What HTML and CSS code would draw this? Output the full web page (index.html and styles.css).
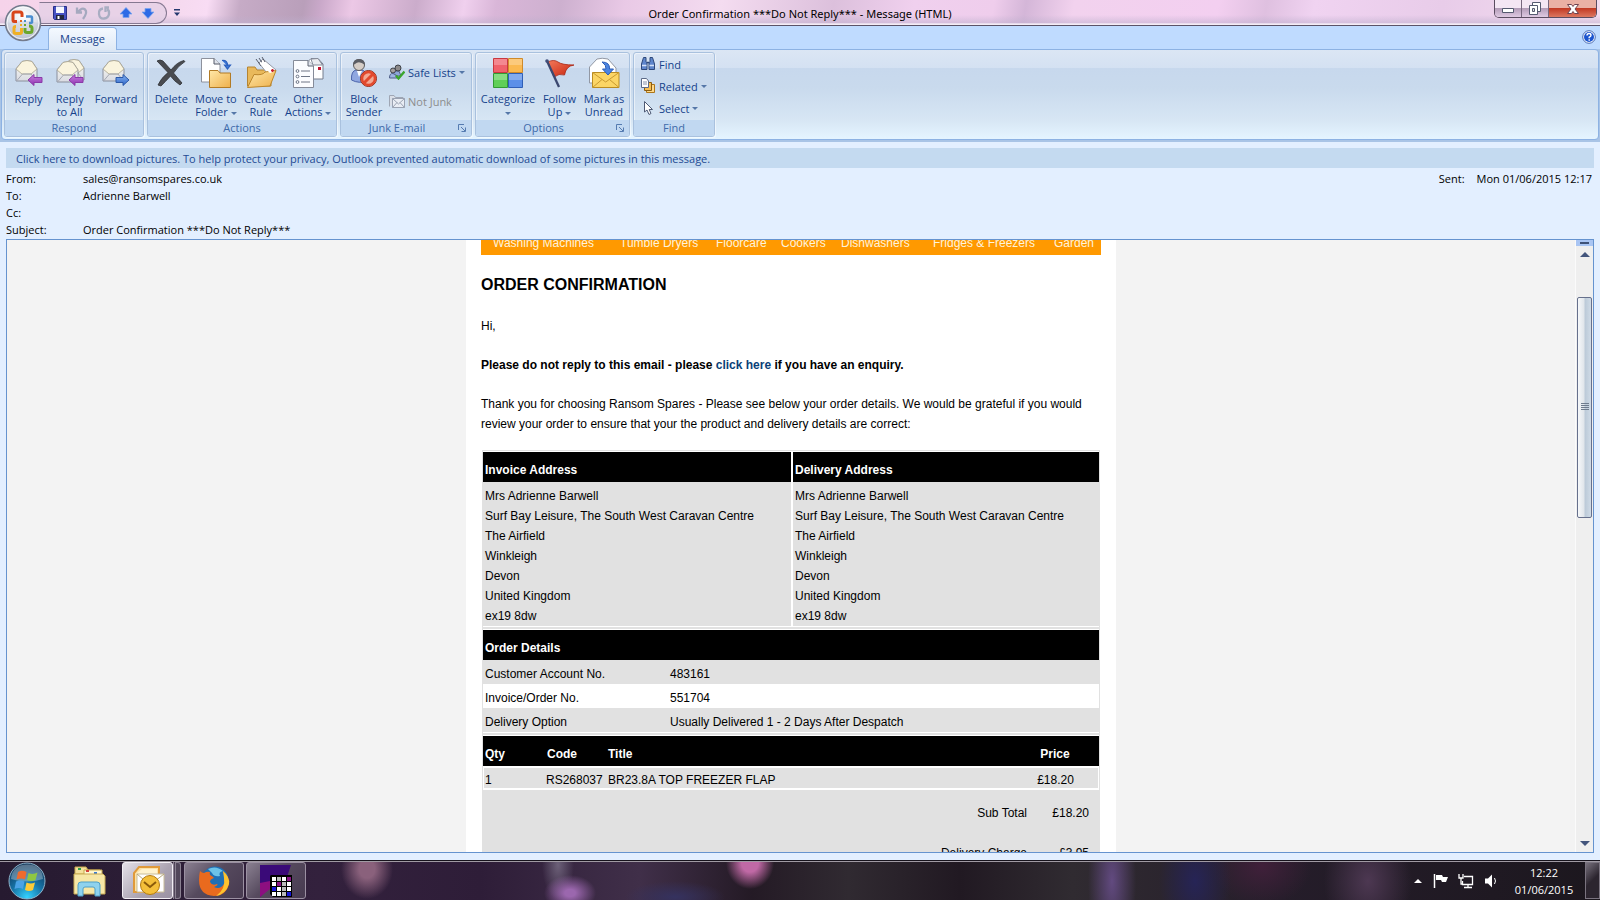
FILE: index.html
```html
<!DOCTYPE html>
<html lang="en">
<head>
<meta charset="utf-8">
<title>Order Confirmation ***Do Not Reply*** - Message (HTML)</title>
<link rel="stylesheet" href="styles.css">
</head>
<body>
<svg class="defs" width="0" height="0" aria-hidden="true">
  <defs>
    <linearGradient id="gFolder" x1="0" y1="0" x2="1" y2="1"><stop offset="0" stop-color="#ffe8a8"/><stop offset="1" stop-color="#eeb04c"/></linearGradient>
    <linearGradient id="gPaper" x1="0" y1="0" x2="0" y2="1"><stop offset="0" stop-color="#fffef6"/><stop offset="1" stop-color="#d9dbe2"/></linearGradient>
    <linearGradient id="gPurple" x1="0" y1="0" x2="0" y2="1"><stop offset="0" stop-color="#c983e0"/><stop offset="1" stop-color="#8d2fb0"/></linearGradient>
    <linearGradient id="gBlue" x1="0" y1="0" x2="0" y2="1"><stop offset="0" stop-color="#86b4f2"/><stop offset="1" stop-color="#2f66c8"/></linearGradient>
    <linearGradient id="gFlag" x1="0" y1="0" x2="1" y2="1"><stop offset="0" stop-color="#f47a5a"/><stop offset="1" stop-color="#c5200c"/></linearGradient>
    <radialGradient id="gOrb" cx=".5" cy=".3" r=".75"><stop offset="0" stop-color="#fff"/><stop offset=".55" stop-color="#dfe3ec"/><stop offset="1" stop-color="#a4acbd"/></radialGradient>
    <radialGradient id="gStart" cx=".5" cy=".95" r=".9"><stop offset="0" stop-color="#35d2ff"/><stop offset=".5" stop-color="#1673a6"/><stop offset="1" stop-color="#10365a"/></radialGradient>
    <g id="env">
      <path d="M2 11 8 3.500Q13 1.500 18 3.500L23 11V23H2z" fill="url(#gPaper)" stroke="#8a8f9c"/>
      <path d="M2 11 8 3.500Q13 1.500 18 3.500L23 11 17 16H8z" fill="#faf4de" stroke="#a9a48f" stroke-width=".8"/>
      <path d="M2.500 23 8.500 16H17L22.500 23" fill="none" stroke="#a5a9b4"/>
    </g>
  </defs>
</svg>

<header class="titlebar">
  <button class="orb" type="button" aria-label="Office Button">
    <svg width="38" height="38" viewBox="0 0 38 38"><circle cx="19" cy="19" r="17.500" fill="url(#gOrb)" stroke="#747b8d" stroke-width="1.500"/><path d="M3 19Q19 15 35 19Q34 34 19 35Q4 34 3 19" fill="#c4cad8" opacity=".5"/><circle cx="19" cy="19" r="16" fill="none" stroke="#fff" opacity=".8"/>
      <g fill="none" stroke-width="3"><path d="M13 17.500H10Q9 17.500 9 16V10Q9 8 11 8H16Q18 8 18 10V13" stroke="#d8451a"/><path d="M22 12.500H27Q28 12.500 28 14V18.500Q28 19 25 19" stroke="#4a8ed0" stroke-width="2.500"/><path d="M12 22.500Q10 22.500 10 24V28Q10 29.500 12 29.500H16Q17.500 29.500 17.500 28V24" stroke="#f0b024"/><path d="M21 24V27Q21 28.500 23 28.500H26Q28 28.500 28 26.500V24Q28 22 25 22" stroke="#6ba72c"/></g>
      <g fill="#e06a25"><rect x="16" y="16" width="2" height="2"/><rect x="20" y="16" width="2" height="2" fill="#4a8ed0"/><rect x="16" y="20" width="2" height="2" fill="#f0b024"/><rect x="20" y="20" width="2" height="2" fill="#6ba72c"/></g>
    </svg>
  </button>
  <nav class="qat" aria-label="Quick Access Toolbar">
    <button type="button" aria-label="Save"><svg width="16" height="16" viewBox="0 0 16 16"><path d="M1.500 1.500h13v13h-12l-1-1z" fill="#4651c4" stroke="#272f86"/><path d="M4 1.500h8V8H4z" fill="#f5f8ff"/><path d="M4 10h8v4.500H4z" fill="#22273c"/><path d="M5.500 11h2v3h-2z" fill="#fff"/></svg></button>
    <button type="button" aria-label="Undo"><svg width="16" height="16" viewBox="0 0 16 16"><path d="M3 2.500V7.500H8M4 7Q8 2 11 4.500T9 14" fill="none" stroke="#a5a9bf" stroke-width="2.300"/></svg></button>
    <button type="button" aria-label="Redo"><svg width="16" height="16" viewBox="0 0 16 16"><path d="M7 3.500Q2.500 4 3 9T8 13.500 13 9 11 4.500M13 2.500H9.500V7" fill="none" stroke="#a9adc2" stroke-width="2.300"/></svg></button>
    <button type="button" aria-label="Previous Item"><svg width="16" height="16" viewBox="0 0 16 16"><path d="M8 2.500 14 9H11V12.500H5V9H2z" fill="#2e6be6" stroke="#7ba4ee" stroke-width=".8"/></svg></button>
    <button type="button" aria-label="Next Item"><svg width="16" height="16" viewBox="0 0 16 16"><path d="M8 13.500 14 7H11V3.500H5V7H2z" fill="#2e6be6" stroke="#7ba4ee" stroke-width=".8"/></svg></button>
  </nav>
  <button class="qat-more" type="button" aria-label="Customize Quick Access Toolbar"><svg width="8" height="8" viewBox="0 0 8 8"><path d="M1 0h6v1.500H1zM1 3.500h6L4 7z" fill="#25386e"/></svg></button>
  <h1 class="window-title">Order Confirmation ***Do Not Reply*** - Message (HTML)</h1>
  <div class="window-buttons">
    <button type="button" aria-label="Minimize"><svg width="14" height="14" viewBox="0 0 14 14"><path d="M1.500 6.500h11v4h-11z" fill="#fff" stroke="#555a70"/></svg></button>
    <button type="button" aria-label="Restore Down"><svg width="14" height="14" viewBox="0 0 14 14"><path d="M4.500.5h8v9h-8z" fill="#fff" stroke="#555a70"/><path d="M1.500 3.500h8v9h-8z" fill="#fff" stroke="#555a70"/><path d="M4.500 6.500h2v3h-2z" fill="#ddd" stroke="#555a70"/></svg></button>
    <button class="close" type="button" aria-label="Close"><svg width="14" height="14" viewBox="0 0 14 14"><path d="M1.500 2.500h4L7 4.500l1.500-2h4L9 7l3.500 4.500h-4L7 9.500l-1.500 2h-4L5 7z" fill="#fff" stroke="#6d4350"/></svg></button>
  </div>
</header>

<div class="tabs">
  <button class="tab" type="button">Message</button>
  <button class="help" type="button" aria-label="Help"><svg width="14" height="14" viewBox="0 0 14 14"><circle cx="7" cy="7" r="6.300" fill="#fff" stroke="#496bb2"/><circle cx="7" cy="7" r="5" fill="#1c55cf"/><path d="M5 5.500Q5 3.500 7 3.500T9 5.200Q9 6.300 7.200 7.200V8.300M7.200 9.300V10.700" fill="none" stroke="#fff" stroke-width="1.400"/></svg></button>
</div>

<div class="ribbon-wrap">
<div class="ribbon">
  <section class="group respond">
    <div class="tools">
      <button class="big" type="button"><svg width="32" height="32" viewBox="0 0 32 32"><use href="#env" x="1" y="1"/><path d="M15 23 21 17.500V20.500H29V25.500H21V28.500z" fill="url(#gPurple)" stroke="#8a3ba8"/></svg><span>Reply</span></button>
      <button class="big" type="button"><svg width="32" height="32" viewBox="0 0 32 32"><use href="#env" x="7" y="0"/><use href="#env" x="1" y="2"/><path d="M15 23 21 17.500V20.500H29V25.500H21V28.500z" fill="url(#gPurple)" stroke="#8a3ba8"/></svg><span>Reply<br>to All</span></button>
      <button class="big" type="button"><svg width="32" height="32" viewBox="0 0 32 32"><use href="#env" x="1" y="1"/><path d="M29 23 23 17.500V20.500H16V25.500H23V28.500z" fill="url(#gBlue)" stroke="#2b58a8"/></svg><span>Forward</span></button>
    </div>
    <h2>Respond</h2>
  </section>

  <section class="group actions">
    <div class="tools">
      <button class="big" type="button"><svg width="32" height="32" viewBox="0 0 32 32"><path d="M2 4Q5 2 8 4L16 13Q22 5 29 3.500L30 4.500Q23 9 18.500 16L27 26 25 28Q19 24 15.500 19Q10 25 6 29L3 28Q6 21 13 15.500z" fill="#494b50" stroke="#303236" stroke-width=".8"/></svg><span>Delete</span></button>
      <button class="big" type="button"><svg width="32" height="32" viewBox="0 0 32 32"><path d="M1.500 1.500H14L20 7V25H1.500z" fill="#fff" stroke="#8d919c"/><path d="M14 1.500V7H20" fill="#dfe3ea" stroke="#555b68"/><path d="M9.500 13.500H18L20 16H30.500V30.500H9.500z" fill="url(#gFolder)" stroke="#b27b25"/><path d="M22 3.500Q28 3 27.500 9M24.500 8H30.500L27.500 12z" fill="#3b78d8" stroke="#2b5fbd" stroke-width="1.200"/></svg><span>Move to<br>Folder <i class="dd"></i></span></button>
      <button class="big" type="button"><svg width="32" height="32" viewBox="0 0 32 32"><path d="M2.500 29V10H10L12 13H26V29z" fill="#e9b95b" stroke="#b58432"/><path d="M14 6 18 2 31 13 25 20z" fill="#fff" stroke="#9498a5"/><path d="M11 2 16 9M14 1 18 7M17 0 20 5" stroke="#555b6a"/><path d="M2.500 30.500 9 17.500Q18 18.500 20 15L31 13.500 25 29z" fill="url(#gFolder)" stroke="#bb862c"/><path d="M15 7 25 16 29 14.500 18 4z" fill="#fff"/><path d="M26 13.500h3M27.500 12v3" stroke="#c8202e" stroke-width="1.400"/></svg><span>Create<br>Rule</span></button>
      <button class="big" type="button"><svg width="32" height="32" viewBox="0 0 32 32"><path d="M15.500 5 19 1.500H26L31 7V22H15.500z" fill="#fff" stroke="#747c8c"/><path d="M19 2 26 1.500 30.500 8H21z" fill="#e9ebf0" stroke="#858b99"/><path d="M26 10h3v3h-3z" fill="#c4122f"/><path d="M1.500 3.500H16L21.500 9V30.500H1.500z" fill="#fbfcff" stroke="#858b99"/><path d="M16 3.500V9H21.500" fill="#dfe3ec" stroke="#606675"/><g fill="#fff" stroke="#5d6679" stroke-width=".9"><circle cx="5.500" cy="14" r="1.400"/><circle cx="5.500" cy="19.500" r="1.400"/><circle cx="5.500" cy="25" r="1.400"/><path d="M9 14h9M9 19.500h9M9 25h9"/></g></svg><span>Other<br>Actions <i class="dd"></i></span></button>
    </div>
    <h2>Actions</h2>
  </section>

  <section class="group junk">
    <div class="tools">
      <button class="big" type="button"><svg width="32" height="32" viewBox="0 0 32 32"><path d="M3.500 23Q3 14 8 13H14Q19 14 19 24Q11 27 3.500 23" fill="#8fa7e0" stroke="#4c64ab"/><path d="M9 14 11 20 14 14z" fill="#fff"/><circle cx="11" cy="8" r="5.500" fill="#d5cdc6" stroke="#5c5a5a"/><path d="M5 8Q5 2 11 2T17 8Q11 3 7 7z" fill="#5b5d63"/><circle cx="20.500" cy="21.500" r="8" fill="#f3a893" stroke="#8c2818"/><circle cx="20.500" cy="21.500" r="6.500" fill="none" stroke="#e2492d" stroke-width="2.500"/><path d="M16 26 25 17" stroke="#e2492d" stroke-width="3"/></svg><span>Block<br>Sender</span></button>
      <div class="stack">
        <button class="small" type="button"><svg width="16" height="16" viewBox="0 0 16 16"><path d="M4 9Q5 6 10 7L12 12H4z" fill="#8ea6d8" stroke="#4f5f88"/><circle cx="9" cy="4" r="3" fill="#8d8a8a" stroke="#3f4249"/><circle cx="4" cy="6.500" r="2.500" fill="#a5a0a0" stroke="#3f4249"/><path d="M.5 14Q.5 9 4 9.500T8 14z" fill="#9db3e2" stroke="#4f5f88"/><path d="M7 11.500 9.500 14.500 15.500 7.500" fill="none" stroke="#3aa52c" stroke-width="2.300"/></svg><span>Safe Lists</span><i class="dd"></i></button>
        <button class="small" type="button" disabled><svg width="16" height="16" viewBox="0 0 16 16"><path d="M.5 13.500V2.500H5L6.500 4.500H14V6" fill="#dadfe8" stroke="#9fa6b4"/><path d="M3.500 5.500H15.500V14.500H3.500z" fill="#e9edf4" stroke="#9aa2b2"/><path d="M3.500 5.500 9.500 11 15.500 5.500M3.500 14.500 8 9.500M15.500 14.500 11 9.500" fill="none" stroke="#9aa2b2"/></svg><span>Not Junk</span></button>
      </div>
    </div>
    <h2>Junk E-mail</h2>
    <button class="launcher" type="button" aria-label="Junk E-mail Options"><svg width="8" height="8" viewBox="0 0 8 8"><path d="M.5 6V.5H6M3 3 7 7M7.500 3.500V7.500H3.500" fill="none" stroke="#557bb0"/></svg></button>
  </section>

  <section class="group options">
    <div class="tools">
      <button class="big" type="button"><svg width="32" height="32" viewBox="0 0 32 32"><path d="M1.500 1.500h14v14h-14z" fill="#f0616b" stroke="#c9383f"/><path d="M16.500 1.500h14v14h-14z" fill="#fbb950" stroke="#cf8a2a"/><path d="M1.500 16.500h14v14h-14z" fill="#5fcf57" stroke="#319a34"/><path d="M16.500 16.500h14v14h-14z" fill="#5b8fe8" stroke="#2f5fb7"/><path d="M2 8H15V2H2zM17 8H30V2H17zM2 23H15V17H2zM17 23H30V17H17z" fill="#fff" opacity=".25"/></svg><span>Categorize<br><i class="dd"></i></span></button>
      <button class="big" type="button"><svg width="32" height="32" viewBox="0 0 32 32"><path d="M4.500 5Q11 2 15 5T31 8Q23 9 21.500 18Q16 16 11 20z" fill="url(#gFlag)" stroke="#a92412" stroke-width=".8"/><path d="M4 4 16 30" stroke="#3b4870" stroke-width="2.300"/><circle cx="4" cy="4" r="1.800" fill="#414f7a"/></svg><span>Follow<br>Up <i class="dd"></i></span></button>
      <button class="big" type="button"><svg width="32" height="32" viewBox="0 0 32 32"><path d="M1.500 26V10L9 2Q14 .5 20 2L28 11V26z" fill="#fff" stroke="#9298a4"/><path d="M4.500 15.500H31V30.500H4.500z" fill="#fbd565" stroke="#ba8c22"/><path d="M4.500 15.500 17.700 25 31 15.500M4.500 30.500 14 22.500M31 30.500 21.500 22.500" fill="none" stroke="#c99a31"/><path d="M14 5Q22 5 21.500 12H25.500L20 18 14.500 12H18Q18.500 8 14 5" fill="#4b84e0" stroke="#2b5cb8"/></svg><span>Mark as<br>Unread</span></button>
    </div>
    <h2>Options</h2>
    <button class="launcher" type="button" aria-label="Message Options"><svg width="8" height="8" viewBox="0 0 8 8"><path d="M.5 6V.5H6M3 3 7 7M7.500 3.500V7.500H3.500" fill="none" stroke="#557bb0"/></svg></button>
  </section>

  <section class="group find">
    <div class="tools">
      <div class="stack">
        <button class="small" type="button"><svg width="16" height="16" viewBox="0 0 16 16"><path d="M3.500 1.500h2.500v4l1 1v7H1.500V8zM10 1.500h2.500L14.500 8v5.500H9v-7l1-1z" fill="#5f86cc" stroke="#2f4879"/><path d="M2 9.500h4.500M9.500 9.500H14" stroke="#d5e2f8" stroke-width="1.500"/><path d="M6.500 6.500h3" stroke="#2f4879" stroke-width="1.500"/></svg><span>Find</span></button>
        <button class="small" type="button"><svg width="16" height="16" viewBox="0 0 16 16"><path d="M6.500 6.500h8v8h-8z" fill="#ffd98a" stroke="#ad7518"/><path d="M4.500 4.500h7v8h-7z" fill="#f8bd50" stroke="#8a5d12"/><path d="M1.500.5H6.500L8.500 3V9.500h-7z" fill="#fff" stroke="#5c6b88"/><path d="M3 4h4M3 6h4" stroke="#8592ab"/></svg><span>Related</span><i class="dd"></i></button>
        <button class="small" type="button"><svg width="16" height="16" viewBox="0 0 16 16"><path d="M4.500 1.500V12L7 10 9 14.500 11 13.500 9.200 9.500H12.500z" fill="#fff" stroke="#4e5a75"/></svg><span>Select</span><i class="dd"></i></button>
      </div>
    </div>
    <h2>Find</h2>
  </section>
</div>
</div>

<main class="message">
  <button class="infobar" type="button">Click here to download pictures. To help protect your privacy, Outlook prevented automatic download of some pictures in this message.</button>
  <div class="headers">
    <dl class="fields">
      <dt>From:</dt><dd>sales@ransomspares.co.uk</dd>
      <dt>To:</dt><dd>Adrienne Barwell</dd>
      <dt>Cc:</dt><dd></dd>
      <dt>Subject:</dt><dd>Order Confirmation ***Do Not Reply***</dd>
    </dl>
    <p class="sent"><span>Sent:</span><span>Mon 01/06/2015 12:17</span></p>
  </div>

  <div class="pane">
    <div class="viewport">
      <article class="mail">
        <nav class="shop-nav">
          <a href="#washing">Washing Machines</a><a href="#dryers">Tumble Dryers</a><a href="#floorcare">Floorcare</a><a href="#cookers">Cookers</a><a href="#dishwashers">Dishwashers</a><a href="#fridges">Fridges &amp; Freezers</a><a href="#garden">Garden</a>
        </nav>
        <h2>ORDER CONFIRMATION</h2>
        <p>Hi,</p>
        <p class="strong">Please do not reply to this email - please <a href="#enquiry">click here</a> if you have an enquiry.</p>
        <p>Thank you for choosing Ransom Spares - Please see below your order details. We would be grateful if you would review your order to ensure that your the product and delivery details are correct:</p>
        <div class="tables">
          <table class="addresses">
            <thead><tr><th>Invoice Address</th><th>Delivery Address</th></tr></thead>
            <tbody><tr>
              <td>Mrs Adrienne Barwell<br>Surf Bay Leisure, The South West Caravan Centre<br>The Airfield<br>Winkleigh<br>Devon<br>United Kingdom<br>ex19 8dw</td>
              <td>Mrs Adrienne Barwell<br>Surf Bay Leisure, The South West Caravan Centre<br>The Airfield<br>Winkleigh<br>Devon<br>United Kingdom<br>ex19 8dw</td>
            </tr></tbody>
          </table>
          <table class="details">
            <thead><tr><th colspan="2">Order Details</th></tr></thead>
            <tbody>
              <tr><td>Customer Account No.</td><td>483161</td></tr>
              <tr><td>Invoice/Order No.</td><td>551704</td></tr>
              <tr><td>Delivery Option</td><td>Usually Delivered 1 - 2 Days After Despatch</td></tr>
            </tbody>
          </table>
          <table class="items">
            <thead><tr><th>Qty</th><th>Code</th><th>Title</th><th>Price</th></tr></thead>
            <tbody><tr><td>1</td><td>RS268037</td><td>BR23.8A TOP FREEZER FLAP</td><td>£18.20</td></tr></tbody>
          </table>
          <table class="totals">
            <tbody>
              <tr><td>Sub Total</td><td>£18.20</td></tr>
              <tr><td>Delivery Charge</td><td>£3.95</td></tr>
            </tbody>
          </table>
        </div>
      </article>
    </div>
    <div class="scrollbar" aria-hidden="true">
      <span class="split"></span>
      <span class="arrow up"></span>
      <span class="track"><span class="thumb"><svg width="8" height="8" viewBox="0 0 8 8"><path d="M0 .5h8M0 2.500h8M0 4.500h8M0 6.500h8" stroke="#6f7c8e"/></svg></span></span>
      <span class="arrow down"></span>
    </div>
  </div>
</main>

<footer class="taskbar">
  <button class="start" type="button" aria-label="Start"><svg width="38" height="38" viewBox="0 0 38 38"><circle cx="19" cy="19" r="18" fill="url(#gStart)" stroke="#8fb4cb"/><path d="M3 17Q4 3 19 2.500T35 17Q19 22 3 17" fill="#fff" opacity=".3"/><path d="M10 10Q14 7.500 18.500 10L17 17.500Q13 15.500 8.500 17.500z" fill="#ee6b2e"/><path d="M20.500 11Q25 13 29.500 10.500L27.500 18Q23 20 19 18z" fill="#8fc742"/><path d="M8 19.500Q12.500 17.500 16.500 19.500L15 27Q11 25 6.500 27z" fill="#4aa3e6"/><path d="M18.500 20.500Q23 22.500 27 20.500L25 28Q21 30 17 28z" fill="#fccb38"/></svg></button>
  <button class="task bare" type="button" aria-label="Windows Explorer"><svg width="34" height="32" viewBox="0 0 34 32"><path d="M3 2h11l2 3h12v4H3z" fill="#f5e19c" stroke="#c6a84e"/><path d="M6 3h3v2H6z" fill="#2fa04a"/><path d="M12 5h18v5H12z" fill="#fff6cf" stroke="#c6a84e"/><path d="M14 5h3v2h-3z" fill="#d5413a"/><path d="M22 7h3v2h-3z" fill="#3b7dd2"/><path d="M2 9h29l2 2v18H2z" fill="#f7e7a6" stroke="#c9ab55"/><path d="M6 31V20Q6 17 9 17H25Q28 17 28 20V31H23V24Q23 22 21 22H13Q11 22 11 24V31z" fill="#8ed2ee" stroke="#4d9fc8"/></svg></button>
  <button class="task active" type="button" aria-label="Microsoft Outlook"><svg width="34" height="32" viewBox="0 0 34 32"><path d="M3 27V8L8 2H28V27z" fill="#fbe2a6" stroke="#e09a3a" stroke-width="2"/><path d="M6 8 11 4H26V9H6z" fill="#fff3cf"/><path d="M6 9H33V27H6z" fill="#fff" stroke="#c9bd9a"/><path d="M6 9 19 20 33 9" fill="none" stroke="#b9a97b"/><circle cx="19" cy="20" r="9.500" fill="#f4bf3a" stroke="#b37b12"/><path d="M13 17 19 22 25 17" fill="none" stroke="#8a5a0a" stroke-width="2"/></svg></button>
  <span class="stacked"></span>
  <button class="task" type="button" aria-label="Firefox"><svg width="32" height="32" viewBox="0 0 32 32"><circle cx="17" cy="15" r="13.500" fill="#1f6fb5"/><path d="M10 4Q18 0 25 6Q20 7 22 11Q16 12 14 8z" fill="#6cc2e8"/><path d="M2 6Q4 8 6 8Q9 6 12 7Q11 10 14 11L16 13Q12 14 12 17Q14 21 19 19Q21 20 16 22Q22 25 26 19Q28 13 25 6Q32 12 31 19Q28 31 16 31Q1 30 1 15Q1 10 2 6" fill="#e96a1e"/><path d="M25 6Q32 12 31 19Q28 29 18 31Q28 24 26 13z" fill="#fdc32f"/></svg></button>
  <button class="task" type="button" aria-label="Application"><svg width="34" height="32" viewBox="0 0 34 32"><path d="M1 0H32L28 12H11V22L1 32z" fill="#3a0a78"/><path d="M1 18 11 16V24L1 32z" fill="#8c0f80"/><path d="M12 10H33V32H14L11 29V11z" fill="#000"/><g fill="#fff"><path d="M13 12h4v4h-4zM23 12h4v4h-4zM13 17h4v4h-4zM28 17h4v4h-4zM18 22h4v4h-4zM28 22h4v4h-4zM13 27h4v4h-4zM18 27h4v4h-4z"/></g><g fill="#bbb"><path d="M18 12h4v4h-4zM23 17h4v4h-4zM23 22h4v4h-4zM23 27h4v4h-4z"/></g><path d="M28 12h4v4h-4zM18 17h4v4h-4z" fill="#8c1589"/><path d="M13 22h4v4h-4zM28 27h4v4h-4z" fill="#1818d8"/></svg></button>
  <div class="tray">
    <button type="button" aria-label="Show hidden icons"><svg width="8" height="8" viewBox="0 0 8 8"><path d="M0 6 4 2 8 6z" fill="#fff"/></svg></button>
    <button type="button" aria-label="Action Center"><svg width="16" height="16" viewBox="0 0 16 16"><path d="M1.500 1v14" stroke="#fff" stroke-width="1.500"/><path d="M3 2h6l1 2h5l-2 5H9L8 7H3z" fill="#fff"/></svg></button>
    <button type="button" aria-label="Network"><svg width="16" height="16" viewBox="0 0 16 16"><path d="M6 3.500h8.500v8H4.500V8" fill="none" stroke="#fff" stroke-width="1.300"/><path d="M10 11.500v3M6 14.500h8M1 1v4h4V1M3 5v6h2" fill="none" stroke="#fff" stroke-width="1.300"/></svg></button>
    <button type="button" aria-label="Volume"><svg width="16" height="16" viewBox="0 0 16 16"><path d="M2 5.500h3L9 1.500v13L5 10.500H2z" fill="#fff"/><path d="M11.500 5Q13.500 8 11.500 11" fill="none" stroke="#fff"/></svg></button>
    <time class="clock" datetime="2015-06-01T12:22"><span>12:22</span><span>01/06/2015</span></time>
    <button class="desktop" type="button" aria-label="Show desktop"></button>
  </div>
</footer>
</body>
</html>
```
FILE: styles.css
```css
* { box-sizing: border-box; }
body {
  margin: 0;
  height: 100vh;
  display: flex;
  flex-direction: column;
  overflow: hidden;
  background: #e3efff;
  color: #000;
  font: 11px/13px "Open Sans", "Noto Sans", sans-serif;
}
button { border: 0; padding: 0; margin: 0; background: none; color: inherit; font: inherit; }
h1, h2, p, dl, dd { margin: 0; font-weight: normal; }
svg { display: block; flex: none; }
.defs { position: absolute; }

/* Title bar */
.titlebar {
  position: relative;
  flex: none;
  display: flex;
  height: 26px;
  border-bottom: 1px solid #5b5368;
  background:
    linear-gradient(transparent 60%, rgba(190, 175, 205, .5) 90%, #f4ecf6 96%),
    linear-gradient(100deg, #f6d3ea 0, #f4d8ec 10%, #f8dcf4 13%, #c6abc6 15%, #b99fba 19%, #c9a8c9 20%, #ecc8e6 22%, #cbaccb 26%, #f0d0ee 29%, #d9b6d8 31%, #cdb0cf 35%, #e9c9e6 39%, #f4dcf0 45%, #dcc0dc 52%, #f0d0ee 57%, #efcdec 62%, #d4b6d8 64%, #f2d2ee 67%, #f3cff0 76%, #dfc0e0 79%, #f0d3f1 82%, #e8cce9 90%, #f4def0 100%);
}
.orb { position: absolute; z-index: 2; left: 4px; top: 4px; }
.qat {
  display: flex;
  align-items: center;
  gap: 6px;
  margin: 2px 0 1px 39px;
  padding: 0 10px 0 12px;
  border: 1px solid #857891;
  border-left-color: transparent;
  border-radius: 0 11px 11px 0;
  background: rgba(226, 208, 230, .7);
}
.qat-more { width: 20px; display: grid; place-items: center; }
.window-title {
  position: absolute;
  inset: 0;
  text-align: center;
  font-size: 11px;
  font-family: "Noto Sans", "Open Sans", sans-serif;
  line-height: 27px;
  pointer-events: none;
}
.window-buttons { display: flex; margin: 0 3px 0 auto; height: 18px; border: 1px solid #5a4c60; border-top: 0; border-radius: 0 0 5px 5px; overflow: hidden; }
.window-buttons button { width: 27px; display: grid; place-items: center; border-right: 1px solid #77677e; background: linear-gradient(#f4e6f4 45%, #b49db9 50%, #dfcae2); }
.window-buttons .close { width: 47px; border: 0; background: linear-gradient(#eab0a4 45%, #c23a24 50%, #dd7861); }

/* Ribbon */
.tabs { flex: none; display: flex; justify-content: space-between; align-items: flex-end; height: 23px; padding: 0 4px 0 48px; background: #bfdbff; }
.tab {
  position: relative;
  z-index: 1;
  width: 69px;
  height: 23px;
  margin-bottom: -1px;
  padding-bottom: 2px;
  border: 1px solid #8db2e3;
  border-bottom: 0;
  border-radius: 4px 4px 0 0;
  background: linear-gradient(#f4f9ff, #dfe9f5);
  color: #15428b;
}
.help { margin-bottom: 5px; }
.ribbon-wrap { flex: none; padding: 0 1px 2px; background: #a9c4e6; }
.ribbon {
  display: flex;
  gap: 3px;
  height: 91px;
  padding: 2px;
  border: 1px solid #8db2e3;
  border-radius: 4px;
  background: linear-gradient(#dbe6f4 0, #d4e1f2 18px, #c7d8ed 18px, #c9daed 38px, #d7e6f4 70px, #e4f4ff 88px);
}
.group {
  position: relative;
  display: flex;
  flex-direction: column;
  border: 1px solid #a9c1de;
  border-radius: 3px;
  box-shadow: inset 1px 1px 0 rgba(255, 255, 255, .5), 1px 1px 0 rgba(255, 255, 255, .5);
  color: #15428b;
}
.group h2 { height: 16px; background: #c1d8f1; color: #3e6aaa; font-size: 11px; line-height: 16px; text-align: center; border-radius: 0 0 2px 2px; }
.tools { flex: 1; display: flex; padding: 4px 1px 0 3px; }
.respond { width: 140px; }
.actions { width: 190px; }
.junk { width: 132px; }
.options { width: 155px; }
.find { width: 82px; }
.junk h2, .options h2 { padding-right: 18px; }
.options .tools, .junk .tools { padding-left: 1px; }
.big { flex: 1 1 auto; display: flex; flex-direction: column; align-items: center; gap: 3px; white-space: nowrap; line-height: 13px; text-align: center; }
.junk .big { flex: none; width: 44px; }
.dd { display: inline-block; vertical-align: middle; border: 3px solid transparent; border-top-color: #5577a8; border-bottom: 0; }
.stack { display: flex; flex-direction: column; }
.small { display: flex; align-items: center; gap: 3px; height: 22px; white-space: nowrap; }
.small:disabled { color: #8d8d8d; }
.junk .stack { padding: 4px 0 0 3px; gap: 7px; }
.find .stack { padding-left: 3px; }
.find .tools { padding-top: 0; }
.launcher { position: absolute; right: 5px; bottom: 4px; }

/* Message headers */
.message { flex: 1; min-height: 0; display: flex; flex-direction: column; padding: 6px 6px 7px; }
.infobar { flex: none; height: 20px; padding: 0 10px; background: #c4daf0; color: #1f4b94; text-align: left; }
.headers { flex: none; display: flex; justify-content: space-between; padding: 2px 2px 1px 0; line-height: 17px; }
.fields { display: grid; grid-template-columns: 77px auto; grid-auto-rows: 17px; }
.sent { display: flex; gap: 12px; }

/* Reading pane */
.pane { flex: 1; min-height: 0; display: flex; border: 1px solid #6593cf; background: #f3f3f3; }
.viewport { flex: 1; min-width: 0; overflow: hidden; }
.mail {
  width: 650px;
  min-height: 100%;
  margin: 0 auto;
  padding: 0 15px;
  background: #fff;
  font: 12px/20px "Liberation Sans", Arial, sans-serif;
}
.shop-nav {
  display: grid;
  grid-template-columns: 127px 96px 65px 60px 92px 121px auto;
  align-content: end;
  height: 15px;
  overflow: hidden;
  padding-left: 12px;
  background: #ff9900;
}
.shop-nav a { color: #fff3dc; text-decoration: none; line-height: 24px; white-space: nowrap; }
.mail h2 { margin: 20px 0 21px; font-size: 16px; font-weight: bold; }
.mail p { margin-bottom: 19px; }
.mail .strong { font-weight: bold; }
.mail p a { color: #0b3f78; text-decoration: none; }
.tables { margin: -3px 1px 0; border: 1px solid #e1e1e1; border-bottom: 0; background: #e1e1e1; }
table { width: 100%; border-collapse: separate; border-spacing: 0; table-layout: fixed; }
th { height: 30px; padding: 5px 2px 0; background: #000; color: #fff; text-align: left; }
td { padding: 4px 2px 0; vertical-align: top; }
.addresses, .details, .items { border-top: 1px solid #fff; border-bottom: 1px solid #fff; }
.addresses, .details { margin-bottom: 2px; }
.addresses th:first-child { width: 308px; }
.addresses th + th, .addresses td + td { border-left: 2px solid #fff; }
.details { table-layout: auto; }
.details td { padding: 5px 2px 1px; line-height: 18px; }
.details td:first-child { width: 185px; }
.details tr:nth-child(2) td { background: #fff; }
.items th:nth-child(1) { width: 62px; }
.items th:nth-child(2) { width: 61px; }
.items th:nth-child(4) { width: 88px; text-align: center; }
.items td { padding-top: 4px; line-height: 16px; border-top: 2px solid #fff; border-bottom: 1px solid #fff; }
.items td:first-child { border-left: 1px solid #fff; padding-left: 1px; }
.items td:nth-child(2) { white-space: nowrap; padding-left: 1px; }
.items td:last-child { border-right: 1px solid #fff; padding-left: 4px; text-align: center; }
.totals td { height: 40px; padding: 13px 10px 0 0; text-align: right; }
.totals td:last-child { width: 62px; padding-left: 0; }

/* Scroll bar */
.scrollbar { width: 18px; display: flex; flex-direction: column; align-items: stretch; background: #efefef; border-left: 1px solid #fbfbfb; }
.split { height: 6px; background: linear-gradient(#3f5277, #3f5277) center / 9px 2px no-repeat, #a9c5f3; }
.arrow { height: 17px; display: grid; place-items: center; }
.arrow::before { content: ""; border: 5px solid transparent; }
.up::before { border-bottom-color: #43557c; border-top: 0; }
.down::before { border-top-color: #43557c; border-bottom: 0; }
.track { flex: 1; display: flex; flex-direction: column; padding: 34px 1px 0; }
.thumb { height: 41%; display: grid; place-items: center; border: 1px solid #66708c; border-radius: 2px; background: linear-gradient(90deg, #f6f8fa, #e1e6eb 45%, #bccad8 55%, #cfdbe7); }

/* Taskbar */
.taskbar {
  flex: none;
  display: flex;
  align-items: stretch;
  height: 40px;
  padding: 1px 0 1px 7px;
  border-top: 1px solid #17131c;
  box-shadow: inset 0 1px 0 #a09aa3;
  background:
    radial-gradient(ellipse 26px 30px at 367px 8px, #8a617c 30%, transparent),
    radial-gradient(ellipse 26px 18px at 570px 32px, #9b67ae 20%, transparent),
    radial-gradient(ellipse 16px 34px at 558px 4px, #6c6078, transparent),
    radial-gradient(ellipse 24px 26px at 750px 2px, #c069a5 35%, transparent),
    radial-gradient(ellipse 50px 16px at 675px 36px, #35325f, transparent),
    radial-gradient(ellipse 24px 80px at 1112px 20px, #624a80, transparent),
    radial-gradient(ellipse 36px 60px at 1195px 20px, #262456, transparent),
    radial-gradient(ellipse 50px 40px at 1262px 5px, #40203a, transparent),
    radial-gradient(ellipse 44px 60px at 1368px 20px, #4d3852, transparent),
    linear-gradient(90deg, #261a30 0, #33213d 20%, #2e1d38 30%, #402f49 40%, #241a25 47%, #302a31 53%, #211922 60%, #302b31 67%, #251d2a 80%, #1c171e 100%);
}
.start { width: 40px; display: grid; place-items: center; }
.task { width: 60px; margin-right: 2px; display: grid; place-items: center; border: 1px solid #9b90a2; border-radius: 3px; background: linear-gradient(135deg, #8a8091, #564a5e 45%, #473a50); }
.task.bare { width: 51px; margin: 0 8px 0 16px; border: 0; background: none; }
.task.active { width: 51px; margin: 0; border-color: #f2eef4; background: linear-gradient(135deg, #e4e0e8, #aaa2b1 60%, #9b92a3); }
.stacked { width: 8px; margin-right: 3px; border: 1px solid #8a8091; border-left: 3px double #8a8091; border-radius: 0 3px 3px 0; background: #51465a; }
.tray { margin-left: auto; display: flex; align-items: center; gap: 9px; color: #fff; }
.tray button:first-child { margin-right: 2px; }
.clock { display: flex; flex-direction: column; align-items: center; width: 72px; line-height: 17px; }
.desktop { align-self: stretch; width: 15px; margin-left: -4px; border: 1px solid #7a737f; background: linear-gradient(135deg, #77707c, #2c252f 50%); }
```
